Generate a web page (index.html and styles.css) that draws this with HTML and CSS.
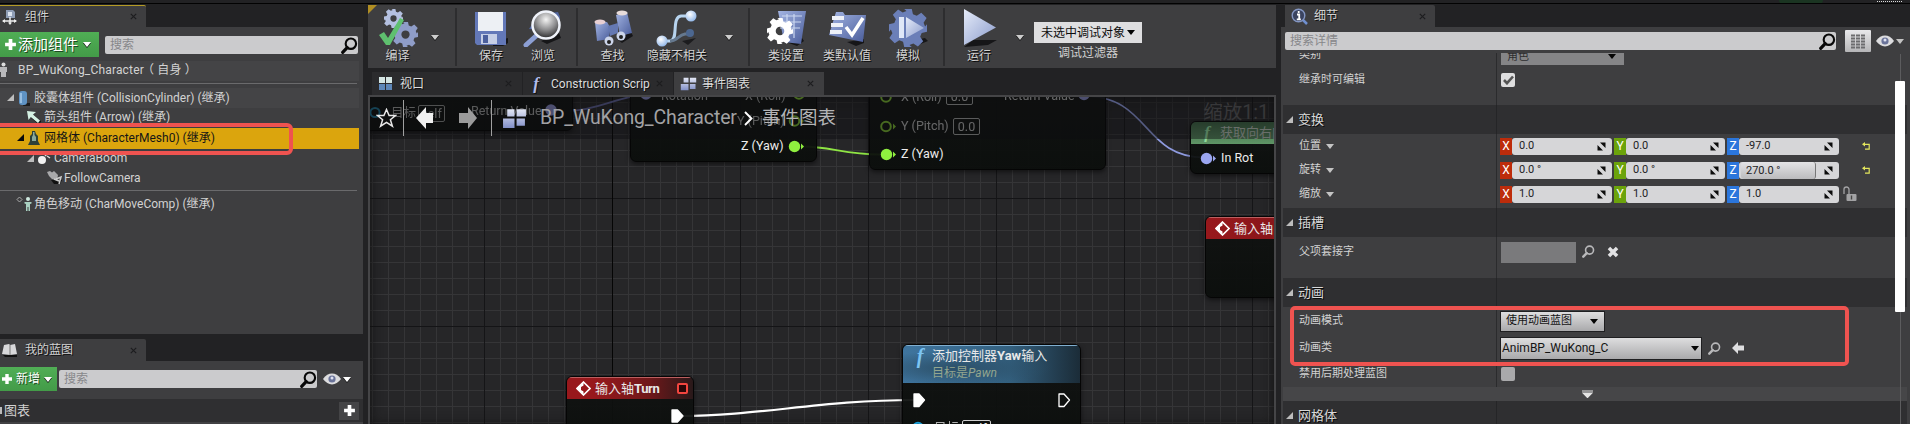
FILE: index.html
```html
<!DOCTYPE html>
<html lang="zh-CN">
<head>
<meta charset="utf-8">
<title>BP_WuKong_Character</title>
<link rel="stylesheet" href="styles.css">
</head>
<body>
<svg class="defs" width="0" height="0">
  <defs>
    <linearGradient id="steel" x1="0" y1="0" x2="1" y2="1"><stop offset="0" stop-color="#e6ecfa"/><stop offset="1" stop-color="#8a9bcb"/></linearGradient>
    <linearGradient id="blue" x1="0" y1="0" x2="1" y2="1"><stop offset="0" stop-color="#a3b4e2"/><stop offset="1" stop-color="#4a5d9b"/></linearGradient>
    <linearGradient id="tile" x1="0" y1="0" x2="0" y2="1"><stop offset="0" stop-color="#e4e8f6"/><stop offset="1" stop-color="#8290c8"/></linearGradient>
    <radialGradient id="lens" cx=".5" cy=".3" r=".7"><stop offset="0" stop-color="#f4f4f4"/><stop offset=".55" stop-color="#8c8c8e"/><stop offset="1" stop-color="#2a2a2c"/></radialGradient>
    <radialGradient id="ball" cx=".4" cy=".35" r=".7"><stop offset="0" stop-color="#fff"/><stop offset="1" stop-color="#8db4e8"/></radialGradient>
    <symbol id="search" viewBox="0 0 16 16"><circle cx="9.3" cy="6.3" r="4.9" fill="none" stroke="currentColor" stroke-width="2"/><path d="M5.8 10 1.6 14.4" stroke="currentColor" stroke-width="3" stroke-linecap="round"/></symbol>
    <symbol id="eye" viewBox="0 0 18 12"><path d="M0 6Q4 .6 9 .6T18 6Q14 11.4 9 11.4T0 6Z" fill="#dcdcde"/><circle cx="9" cy="6" r="3.6" fill="#6a7399"/><circle cx="9" cy="5" r="1.5" fill="#dfe2f2"/></symbol>
    <symbol id="plus" viewBox="0 0 12 12"><path d="M4.3 1h3.4v3.3H11v3.4H7.7V11H4.3V7.7H1V4.3h3.3z" fill="#fff"/></symbol>
    <symbol id="close" viewBox="0 0 7 7"><path d="M.8.8l5.4 5.4M6.2.8.8 6.2" stroke="#1d1d1f" stroke-width="1.2"/></symbol>
    <symbol id="gear" viewBox="-10 -10 20 20"><path fill-rule="evenodd" d="M-2-10h4l.6 2.8 2 .8 2.4-1.6 2.8 2.8-1.6 2.4.8 2L10-2v4l-2.8.6-.8 2 1.6 2.4-2.8 2.8-2.4-1.6-2 .8L2 10h-4l-.6-2.800-2-.8-2.4 1.600-2.800-2.800 1.600-2.400-.8-2L-10 2v-4l2.800-.6.8-2-1.600-2.400 2.800-2.800 2.400 1.600 2-.8zM0-3.300a3.300 3.300 0 1 0 0 6.600 3.300 3.300 0 1 0 0-6.600z"/></symbol>
    <symbol id="graph" viewBox="0 0 24 20"><path d="M5 1h7v7H5zM14 1h9v7h-9zM1 10h11v9H1zM14 10h8v7h-8z" fill="url(#tile)"/></symbol>
    <symbol id="diamond" viewBox="0 0 15 15"><path d="M7.500 1 14 7.500 7.500 14 1 7.500z" fill="none" stroke="#fff" stroke-width="1.600"/><path d="M7.500 1v3.500L5 6v3l2.500 1.500V14L1 7.500z" fill="#fff"/></symbol>
    <symbol id="drag" viewBox="0 0 9 9"><path d="M3 .5h5.500V6zM.5 3v5.500H6z" fill="#0c0c0c"/></symbol>
    <symbol id="reset" viewBox="0 0 8 8"><path d="M1.500 2.300h5.700v4.900H3" fill="none" stroke="#e3e65c" stroke-width="1.200"/><path d="M0 2.300 3 0v4.600z" fill="#e3e65c"/></symbol>
  </defs>
</svg>
<div class="topline"><i class="glow"></i><i class="dots"></i></div>
<div class="editor">
  <aside class="left">
    <div class="tabbar">
      <div class="tab focus">
        <svg width="16" height="16" viewBox="0 0 16 16"><path d="M4 1h7l2 2v6H4z" fill="#8f9db5"/><path d="M6 3h4v4H6z" fill="#dce3ee"/><path d="M8 8v6M1 12h13" stroke="#eee" stroke-width="1.500"/><path d="M0 12l3-2v4zM15 12l-3-2v4zM8 16l-2-2.500h4z" fill="#eee"/></svg>
        <span>组件</span><svg class="x" width="7" height="7"><use href="#close"/></svg>
      </div>
    </div>
    <section class="panel components">
      <div class="tools">
        <button class="green add"><svg width="13" height="13"><use href="#plus"/></svg><span>添加组件</span><i class="caret"></i></button>
        <div class="search"><span>搜索</span><svg width="17" height="17"><use href="#search"/></svg></div>
      </div>
      <div class="self row">
        <svg width="8" height="16" viewBox="0 0 8 16"><circle cx="3.500" cy="2.500" r="2" fill="#ddd"/><path d="M0 5h7v5H6v5H1v-5H0z" fill="#b9b9bb"/></svg>
        <span>BP_WuKong_Character<b>（ 自身 ）</b></span>
      </div>
      <div class="rule"></div>
      <div class="row alt d1"><i class="tri"></i><svg width="12" height="16" viewBox="0 0 12 16"><path d="M6 13h6v3H5z" fill="#1c1c1c"/><rect x="1" y="1" width="8" height="14" rx="3" fill="#5f93c4"/><path d="M3 3v10" stroke="#a9cdec" stroke-width="1.500"/></svg><span>胶囊体组件 (CollisionCylinder) (继承)</span></div>
      <div class="row d2"><svg width="15" height="14" viewBox="0 0 15 14"><path d="M6 6l8 7" stroke="#111" stroke-width="4"/><path d="M1 1l9 1-3 2.500 7 6-2 2.500L4.800 7 2.500 10z" fill="#d5f1e4"/></svg><span>箭头组件 (Arrow) (继承)</span></div>
      <div class="row sel d3"><i class="tri dark"></i><svg width="12" height="16" viewBox="0 0 12 16"><path d="M4 1h3l1 3 2 2v5l2 4H0l2-4V6l2-2z" fill="#2c4038"/><path d="M5 2h1.500v3L8 7v4H4V7l1-2z" fill="#8aa89c"/></svg><span>网格体 (CharacterMesh0) (继承)</span></div>
      <div class="row d4"><i class="tri"></i><svg width="14" height="14" viewBox="0 0 14 14"><circle cx="5" cy="9" r="4" fill="#f2f2f2"/><path d="M8 5l4-4M10 5l3 2" stroke="#ddd" stroke-width="1.500"/></svg><span>CameraBoom</span></div>
      <div class="row d5"><svg width="17" height="15" viewBox="0 0 17 15"><path d="M5 10h11l-2 4H8z" fill="#111"/><path d="M1 2l3-1 2 1.500L8 1l4 4-1 5-5-1-3-3z" fill="#a9a9ab"/><path d="M10 9l5-2-2 7M8 9l5 2" stroke="#ccc" stroke-width="1.500" fill="none"/></svg><span>FollowCamera</span></div>
      <div class="rule second"></div>
      <div class="row move"><svg width="18" height="18" viewBox="0 0 18 18"><path d="M3.500 2 6 4.500 3.500 7 1 4.500z" fill="none" stroke="#aaa"/><circle cx="12" cy="4" r="2" fill="#cfe9df"/><path d="M8.500 7h7v1.500L14 9v7h-1.500v-4h-1v4H10V9l-1.500-.5z" fill="#a9d0c1"/></svg><span>角色移动 (CharMoveComp) (继承)</span></div>
      <i class="mark mark-left"></i>
    </section>
    <div class="tabbar lower">
      <div class="tab">
        <svg width="16" height="15" viewBox="0 0 16 15"><path d="M1 12h14v2H3z" fill="#111"/><path d="M2 2l5-1 1 1 5-1 2 10-7 1-8-1z" fill="#d8d8da"/><path d="M8 2v10" stroke="#777"/></svg>
        <span>我的蓝图</span><svg class="x" width="7" height="7"><use href="#close"/></svg>
      </div>
    </div>
    <section class="panel mybp">
      <div class="tools2">
        <button class="green new"><svg width="12" height="12"><use href="#plus"/></svg><span>新增</span><i class="caret"></i></button>
        <div class="search"><span>搜索</span><svg width="17" height="17"><use href="#search"/></svg></div>
        <svg class="eye" width="18" height="12"><use href="#eye"/></svg><i class="caret"></i>
      </div>
      <div class="graphs"><i class="nub"></i><span>图表</span><button><svg width="13" height="13"><use href="#plus"/></svg></button></div>
    </section>
  </aside>

  <main class="center">
    <div class="toolbar">
      <i class="corner"></i>
      <div class="tool" style="width:49px"><svg width="40" height="38" viewBox="0 0 40 38"><use href="#gear" x="6" y="0" width="19" height="19" fill="#b4c0e0"/><use href="#gear" x="15" y="13" width="25" height="25" fill="#8f9dc8"/><path d="M1 26l5-3 4 6L22 9l4 2L12 36H8z" fill="#5fc06f"/></svg><span>编译</span></div>
      <i class="caret drop1"></i><i class="sep s1"></i>
      <div class="tool" style="width:44px"><svg width="36" height="36" viewBox="0 0 36 36"><path d="M20 32l15-4v5l-5 3H20z" fill="#161618"/><path d="M2 2h31v33H4l-2-2z" fill="#6378b8"/><path d="M5 2h25v19H5z" fill="#edf0f4"/><path d="M8 24h16v10H8z" fill="#c6cfe6"/><path d="M10 25h5v8h-5z" fill="#4b5f9d"/></svg><span>保存</span></div>
      <div class="tool" style="width:60px"><svg width="40" height="38" viewBox="0 0 40 38"><path d="M18 32l18-8 2 5-14 6z" fill="#161618"/><path d="M6 20L15 6l20-3 2 5-2 15z" fill="#51659f"/><path d="M13 27L3 36" stroke="#8c9fd4" stroke-width="5" stroke-linecap="round"/><circle cx="23" cy="16" r="13.500" fill="url(#lens)" stroke="#f0f3fa" stroke-width="2.500"/></svg><span>浏览</span></div>
      <i class="sep s2"></i>
      <div class="tool" style="width:49px"><svg width="40" height="38" viewBox="0 0 40 38"><path d="M24 30l14-7 2 4-11 7z" fill="#161618"/><path d="M2 13l12 0 3 5-1 12-12 2z" fill="url(#blue)"/><path d="M23 6l11-3 5 21-12 3z" fill="url(#blue)"/><path d="M15 17l10-3v10l-8 3z" fill="#6579b3"/><ellipse cx="7" cy="13" rx="5.500" ry="2.500" fill="#e8cfd2"/><ellipse cx="29" cy="4" rx="5.500" ry="2.500" fill="#e8dcda"/><circle cx="16" cy="32" r="4.500" fill="#ccd5ea"/><circle cx="28" cy="27" r="4.500" fill="#ccd5ea"/><circle cx="16" cy="33" r="2" fill="#222"/><circle cx="28" cy="28" r="2" fill="#222"/></svg><span>查找</span></div>
      <div class="tool" style="width:80px"><svg width="44" height="38" viewBox="0 0 44 38"><path d="M27 32l14-3-8 7z" fill="#1c1c1e"/><path d="M7 32h8C24 32 16 8 26 7h9" fill="none" stroke="#b7d4ef" stroke-width="3"/><path d="M15 32c8 0 8-6 15-7h5" fill="none" stroke="#65788e" stroke-width="3"/><circle cx="7" cy="32" r="5.500" fill="url(#ball)"/><circle cx="36" cy="7" r="5.500" fill="url(#ball)"/><circle cx="35" cy="24" r="4" fill="#4c6790"/></svg><span>隐藏不相关</span></div>
      <i class="caret drop2"></i><i class="sep s3"></i>
      <div class="tool" style="width:54px"><svg width="40" height="38" viewBox="0 0 40 38"><path d="M20 33l16-4 2 3-7 5z" fill="#161618"/><path d="M12 2h28l-5 33-17-2z" fill="url(#blue)"/><path d="M16 7h20M15 13h20M14 19h20M21 5v20M28 5v24" stroke="#cbd8f0" stroke-width="1.200" fill="none"/><use href="#gear" x="1" y="9" width="26" height="26" fill="#fff"/></svg><span>类设置</span></div>
      <div class="tool" style="width:68px"><svg width="40" height="38" viewBox="0 0 40 38"><path d="M20 33l17-3v4l-8 3z" fill="#161618"/><path d="M9 3h7l2 3h21l-3 27L2 26z" fill="url(#blue)"/><path d="M5 7h12v4H5zM4 14h12v4H4zM3 21h12v4H3z" fill="#eef1f8"/><path d="M19 18l6 8L36 9" fill="none" stroke="#fff" stroke-width="3.500"/></svg><span>类默认值</span></div>
      <div class="tool" style="width:54px"><svg width="40" height="38" viewBox="0 0 40 38"><path d="M22 32l15-3 3 3-10 4z" fill="#161618"/><use href="#gear" x="1" y="0" width="38" height="38" fill="#6b7fb8"/><circle cx="20" cy="19" r="9" fill="#6b7fb8"/><path d="M11 8h5v21h-5z" fill="#dfe7f7"/><path d="M18 8l18 11-18 10z" fill="url(#steel)"/></svg><span>模拟</span></div>
      <i class="sep s4"></i>
      <div class="tool" style="width:60px"><svg width="40" height="38" viewBox="0 0 40 38"><path d="M5 38l9-7h24l-9 5z" fill="#161618"/><path d="M5 0l32 18.500L5 36z" fill="url(#steel)"/></svg><span>运行</span></div>
      <i class="caret drop3"></i>
      <div class="debug"><button>未选中调试对象<i class="caret black"></i></button><span>调试过滤器</span></div>
    </div>
    <div class="gtabs">
      <div class="gtab dim"><svg width="15" height="15" viewBox="0 0 15 15"><path d="M1 1h6v6H1zM8 1h6v6H8z" fill="#d5e6e4"/><path d="M1 8h6v6H1zM8 8h6v6H8z" fill="#5e87b8"/></svg><span>视口</span><svg class="x" width="7" height="7"><use href="#close"/></svg></div>
      <div class="gtab dim"><em class="fn">f</em><span>Construction Scrip</span><svg class="x" width="7" height="7"><use href="#close"/></svg></div>
      <div class="gtab"><svg width="17" height="14"><use href="#graph"/></svg><span>事件图表</span><svg class="x" width="7" height="7"><use href="#close"/></svg></div>
    </div>
    <div class="canvas">
      <!-- canvas coordinates start at the inner corner of the graph frame -->
      <svg class="wires" width="904" height="327" viewBox="370 97 904 327">
        <path d="M570 111C600 109 608 100 645 94" fill="none" stroke="#5c5f94" stroke-width="1.800"/>
        <path d="M803 146.500C830 146.500 845 154.500 880 154.500" fill="none" stroke="#8fe544" stroke-width="1.800"/>
        <path d="M1084 96C1150 96 1142 157 1204 157.500" fill="none" stroke="#8f9be0" stroke-width="1.600"/>
        <path d="M680 416C760 416 820 400 915 400" fill="none" stroke="#fff" stroke-width="2.200"/>
      </svg>
      <span class="zoom">缩放1:1</span>
      <div class="node" style="left:-20px;top:-40px;width:223px;height:74px"></div>
      <div class="node" style="left:260px;top:-40px;width:187px;height:105px"></div>
      <div class="node" style="left:499px;top:-40px;width:237px;height:113px"></div>
      <div class="node" style="left:820px;top:24px;width:120px;height:53px"><div class="head grn"><em class="fn">f</em><span>获取向右向量</span></div></div>
      <div class="node" style="left:835px;top:119px;width:120px;height:82px"><div class="head red"><svg width="15" height="15"><use href="#diamond"/></svg><span>输入轴</span></div></div>
      <div class="node" style="left:196px;top:279px;width:128px;height:80px"><div class="head red fade"><svg width="15" height="15"><use href="#diamond"/></svg><span>输入轴<b>Turn</b></span><i class="sq"></i></div></div>
      <div class="node" style="left:532px;top:247px;width:179px;height:110px"><div class="head blu"><em class="fn">f</em><div><span>添加控制器<b>Yaw</b>输入</span><small>目标是<i>Pawn</i></small></div></div></div>
      <svg class="pins" width="904" height="327" viewBox="370 97 904 327">
        <g fill="none" stroke-width="2">
          <circle cx="375" cy="112.500" r="4.600" stroke="#1d6d8c"/>
          <g stroke="#77b52e"><circle cx="799" cy="94" r="4.800"/><circle cx="794.500" cy="121" r="4.800"/><circle cx="886" cy="97" r="4.800"/><circle cx="886" cy="126.500" r="4.800"/></g>
          <circle cx="918" cy="427.500" r="4.800" stroke="#1a9fd8"/>
        </g>
        <g fill="#8fef3f"><circle cx="794.500" cy="146.500" r="5.700"/><circle cx="886.500" cy="154.500" r="5.700"/><path d="M801 143.500l3 3-3 3zM893 151.500l3 3-3 3z"/></g>
        <path d="M893 123.500l3 3-3 3zM801 118l3 3-3 3z" fill="#77b52e"/>
        <g fill="#8084bd"><circle cx="551" cy="110" r="5.700"/><circle cx="646" cy="94" r="5.700"/><circle cx="1084" cy="94.500" r="5.700"/></g>
        <circle cx="1206.500" cy="158.500" r="5.700" fill="#9ba6f0"/><path d="M1213 155.500l3 3-3 3z" fill="#9ba6f0"/>
        <g stroke="#fff" stroke-width="1.300" stroke-linejoin="round"><path d="M672 410h5.500l5.500 6-5.500 6H672z" fill="#fff"/><path d="M914 394h5l5.500 6-5.500 6.500h-5z" fill="#fff"/><path d="M1059 394h5l5.500 6-5.500 6.500h-5z" fill="none"/></g>
      </svg>
      <span class="t faint" style="left:21px;top:8px">目标</span><span class="box faint" style="left:48px;top:8px;width:27px">self</span>
      <span class="t faint" style="left:101px;top:6px">Return Value</span>
      <span class="t faint" style="left:291px;top:-9px">Rotation</span><span class="t faint" style="left:375px;top:-9px">X (Roll)</span>
      <span class="t faint" style="left:367px;top:16px">Y (Pitch)</span><span class="t" style="left:371px;top:41px">Z (Yaw)</span>
      <span class="t half" style="left:531px;top:-8px">X (Roll)</span><span class="box half" style="left:576px;top:-9px;width:27px">0.0</span>
      <span class="t half" style="left:531px;top:21px">Y (Pitch)</span><span class="box half" style="left:583px;top:21px;width:27px">0.0</span>
      <span class="t" style="left:531px;top:49px">Z (Yaw)</span><span class="t half" style="left:634px;top:-9px">Return Value</span>
      <span class="t" style="left:851px;top:53px">In Rot</span>
      <span class="t half" style="left:564px;top:323px">目标</span><span class="box" style="left:592px;top:323px;width:29px">self</span>
      <div class="crumbs">
        <svg class="star" width="21" height="20" viewBox="0 0 21 20"><path d="M10.500 1.500l2.600 6h6.400l-5.100 4.200 2 6.500-5.900-3.900-5.900 3.900 2-6.500L1.500 7.500h6.400z" fill="none" stroke="#e8e8e8" stroke-width="1.500"/></svg>
        <i class="bar"></i>
        <svg class="back" width="17" height="22" viewBox="0 0 17 22"><path d="M0 11L10 0v6h7v10h-7v6z" fill="#f0f0f0"/></svg>
        <svg class="fwd" width="18" height="22" viewBox="0 0 18 22"><path d="M18 11L9 0v6H0v10h9v6z" fill="#9b9b9b"/></svg>
        <i class="bar"></i>
        <svg class="gi" width="25" height="21"><use href="#graph"/></svg>
        <span class="bp">BP_WuKong_Character</span>
        <svg class="chev" width="9" height="15" viewBox="0 0 9 15"><path d="M1 1l6.500 6.500L1 14" fill="none" stroke="#fff" stroke-width="1.900"/></svg>
        <span class="ev">事件图表</span>
      </div>
    </div>
  </main>

  <aside class="right">
    <div class="tabbar">
      <div class="tab">
        <svg width="17" height="17" viewBox="0 0 17 17"><path d="M11 11l5 5" stroke="#6f8fd0" stroke-width="2.500"/><circle cx="7.500" cy="7.500" r="6.300" fill="#3b4460" stroke="#8497c4" stroke-width="1.400"/><path d="M7.700 3v2M6 6.500h2.200V11M5.800 11.300h4" stroke="#fff" stroke-width="1.800" fill="none"/></svg>
        <span>细节</span><svg class="x" width="7" height="7"><use href="#close"/></svg>
      </div>
    </div>
    <section class="panel details">
      <div class="dsearch">
        <div class="search"><span>搜索详情</span><svg width="17" height="17"><use href="#search"/></svg></div>
        <button class="grid"><svg width="14" height="15" viewBox="0 0 14 15"><path d="M0 1.500h4m1 0h4m1 0h4M0 4.500h4m1 0h4m1 0h4M0 7.500h4m1 0h4m1 0h4M0 10.500h4m1 0h4m1 0h4M0 13.500h4m1 0h4m1 0h4" stroke="#6c6c6e" stroke-width="2"/></svg></button>
        <svg class="eye" width="18" height="12"><use href="#eye"/></svg><i class="caret soft"></i>
      </div>
      <div class="list">
        <div class="prop p-type"><label>类别</label><div><span class="typebox">角色<i class="caret black"></i></span></div></div>
        <div class="prop p-edit"><label>继承时可编辑</label><div><span class="check"><svg width="11" height="10" viewBox="0 0 11 10"><path d="M1 5l3 3.200L10 1.500" fill="none" stroke="#555" stroke-width="2.600"/></svg></span></div></div>
        <div class="cat"><i class="tri"></i><span>变换</span><i class="split"></i></div>
        <div class="vecs">
          <div class="prop vec"><label>位置 <i class="caret soft"></i></label><div><b class="ax r">X</b><span class="num">0.0<svg width="9" height="9"><use href="#drag"/></svg></span><b class="ax g">Y</b><span class="num mid">0.0<svg width="9" height="9"><use href="#drag"/></svg></span><b class="ax b">Z</b><span class="num">-97.0<svg width="9" height="9"><use href="#drag"/></svg></span><svg class="rs" width="8" height="8"><use href="#reset"/></svg></div></div>
          <div class="prop vec"><label>旋转 <i class="caret soft"></i></label><div><b class="ax r">X</b><span class="num">0.0 °<svg width="9" height="9"><use href="#drag"/></svg></span><b class="ax g">Y</b><span class="num mid">0.0 °<svg width="9" height="9"><use href="#drag"/></svg></span><b class="ax b">Z</b><span class="num slide"><u>270.0 °</u><svg width="9" height="9"><use href="#drag"/></svg></span><svg class="rs" width="8" height="8"><use href="#reset"/></svg></div></div>
          <div class="prop vec"><label>缩放 <i class="caret soft"></i></label><div><b class="ax r">X</b><span class="num">1.0<svg width="9" height="9"><use href="#drag"/></svg></span><b class="ax g">Y</b><span class="num mid">1.0<svg width="9" height="9"><use href="#drag"/></svg></span><b class="ax b">Z</b><span class="num">1.0<svg width="9" height="9"><use href="#drag"/></svg></span><svg class="lock" width="14" height="16" viewBox="0 0 14 16"><path d="M1 8V3.500a2.500 2.500 0 0 1 5 0V8" fill="none" stroke="#a2a2a4" stroke-width="1.300"/><rect x="3.500" y="8" width="10" height="7" rx="1" fill="#a2a2a4"/><path d="M8.500 9.500v4" stroke="#444" stroke-width="1.400"/></svg></div></div>
        </div>
        <div class="cat"><i class="tri"></i><span>插槽</span><i class="split"></i></div>
        <div class="prop p-socket"><label>父项套接字</label><div><span class="socket"></span><svg class="m" width="13" height="13"><use href="#search"/></svg><svg width="12" height="12" viewBox="0 0 11 11"><path d="M1.800 1.800l7.400 7.400M9.200 1.800L1.800 9.200" stroke="#e2e2e4" stroke-width="3.200"/></svg></div></div>
        <div class="cat anim"><i class="tri"></i><span>动画</span><i class="split"></i></div>
        <div class="animprops">
          <div class="prop p-mode"><label>动画模式</label><div><span class="combo mode">使用动画蓝图<i class="caret black"></i></span></div></div>
          <div class="prop p-class"><label>动画类</label><div><span class="combo cls">AnimBP_WuKong_C<i class="caret black"></i></span><svg class="m" width="13" height="13"><use href="#search"/></svg><svg class="use" width="12" height="12" viewBox="0 0 12 12"><path d="M0 6l6-6v3.500h6v5H6V12z" fill="#dedee0"/></svg></div></div>
          <div class="prop p-post"><label>禁用后期处理蓝图</label><div><span class="check off"></span></div></div>
        </div>
        <div class="more"><svg width="11" height="8" viewBox="0 0 11 8"><path d="M0 1h11M1 3h9L5.500 7.500z" stroke="#e4e4e4" stroke-width="1.200" fill="#e4e4e4"/></svg></div>
        <div class="cat"><i class="tri"></i><span>网格体</span><i class="split"></i></div>
      </div>
      <i class="scroll"></i><i class="mark mark-right"></i>
    </section>
  </aside>
</div>
</body>
</html>
```
FILE: styles.css
```css
* { box-sizing: border-box; }
body { margin: 0; width: 1910px; height: 424px; overflow: hidden; background: #222224; color: #d2d2d2; font: 12px/16px Roboto, "Noto Sans CJK SC", sans-serif; white-space: nowrap; }
button { border: 0; padding: 0; font: inherit; color: inherit; }
svg { display: block; flex: none; }
i, em { flex: none; }
.defs { position: absolute; }
.topline { height: 4px; border-bottom: 1px solid #020202; display: flex; justify-content: flex-end; padding-right: 8px; overflow: hidden; }
.glow { width: 44px; height: 4px; margin-right: 54px; background: #1b3522; border-radius: 0 0 22px 22px; }
.dots { width: 25px; height: 1px; margin-top: 1px; background: repeating-linear-gradient(90deg, #ddd 0 1px, transparent 1px 2px); }
.editor { display: grid; grid-template-columns: 363px 908px 629px; column-gap: 5px; height: 420px; }
.left, .center, .right { min-width: 0; height: 420px; overflow: hidden; }

.tabbar { height: 23px; padding-top: 1px; }
.tab { display: flex; align-items: center; width: 146px; height: 22px; padding: 0 9px 0 2px; background: #3e3e40; border-radius: 0 2px 0 0; text-shadow: 1px 1px 0 #111; }
.tab.focus { border-top: 1px solid #b59b25; }
.tab span { margin-left: 7px; }
.x { margin-left: auto; }
.panel { background: #3e3e40; position: relative; }
.caret { width: 0; height: 0; border: 4px solid transparent; border-top: 5px solid #fff; border-bottom: 0; filter: drop-shadow(0 1px 0 #111); }
.caret.black { border-top-color: #050505; filter: none; }
.caret.soft { border-top-color: #c4c4c4; filter: none; }
.green { display: flex; align-items: center; background: linear-gradient(#50ae55, #439b48); color: #fff; text-shadow: 1px 1px 0 #1c4a20; }
.search { display: flex; align-items: center; justify-content: space-between; height: 18px; padding: 0 0 0 5px; background: #cbcbcd; border-radius: 2px; color: #87878a; }
.search svg { color: #080808; }

.components { height: 307px; padding-top: 5px; overflow: hidden; }
.tools { display: flex; gap: 6px; height: 25px; align-items: flex-start; }
.add { width: 99px; height: 25px; padding-left: 4px; font-size: 15px; }
.add span { margin: 0 5px 0 1px; }
.tools .search { width: 253px; margin-top: 4px; }
.row { display: flex; align-items: center; height: 20px; width: 359px; }
.row.self { height: 20px; margin-top: 4px; padding-bottom: 2px; background: #444446; }
.self svg { margin-right: 10px; }
.self span { letter-spacing: .18px; }
.self b { font-weight: 400; margin-left: -2px; }
.rule { height: 1px; width: 357px; margin: 2px 0 4px; background: #6a6a6c; }
.tri { width: 0; height: 0; border-left: 7px solid transparent; border-bottom: 7px solid #bdbdbd; }
.tri.dark { border-bottom-color: #0b0b0b; }
.alt { background: #444446; }
.d1 { padding-left: 7px; padding-bottom: 1px; } .d1 svg { margin: 0 4px 0 4px; }
.d2, .d4, .d5, .d3 { padding-bottom: 2px; }
.d2 { padding-left: 26px; } .d2 svg { margin-right: 3px; }
.d3 { padding-left: 17px; } .d3 svg { margin: 0 4px 0 4px; }
.sel { height: 21px; background: #dba50d; color: #161616; }
.d4 { padding-left: 27px; } .d4 svg { margin: 0 3px; }
.d5 { height: 19px; padding-left: 46px; } .d5 svg { margin-right: 1px; }
.rule.second { margin: 2px 0 3px; }
.move { padding-left: 16px; }
.mark { position: absolute; border: 4px solid #ef5350; z-index: 4; }
.mark-left { left: -8px; top: 96px; width: 301px; height: 32px; border-radius: 6px; }
.lower { height: 27px; padding-top: 5px; }
.mybp { height: 63px; padding-top: 6px; }
.tools2 { display: flex; align-items: center; height: 24px; }
.new { width: 57px; height: 24px; padding-left: 1px; }
.new span { margin: 0 4px 0 3px; }
.tools2 .search { width: 258px; margin-left: 2px; }
.eye { margin: 0 2px 0 6px; }
.graphs { display: flex; align-items: center; height: 25px; margin-top: 8px; padding-right: 4px; background: #2f2f31; border-bottom: 2px solid #414143; font-size: 13px; }
.nub { width: 2px; height: 7px; margin-right: 2px; background: #bbb; }
.graphs button { display: grid; place-items: center; width: 20px; height: 18px; margin-left: auto; background: #444446; }

.toolbar { position: relative; display: flex; align-items: flex-start; margin-top: 1px; background: #3e3e40; height: 63px; padding: 4px 0 0 5px; }
.corner { position: absolute; left: 0; top: 0; width: 0; height: 0; border-top: 9px solid #b08e23; border-right: 9px solid transparent; }
.tool { display: flex; flex: none; flex-direction: column; align-items: center; height: 58px; }
.tool svg { height: 38px; }
.tool span { margin-top: 1px; text-shadow: 1px 1px 0 #0c0c0c; }
.toolbar > .caret { margin-top: 26px; border-top-color: #cdcdcd; }
.sep { width: 2px; height: 58px; background: #2d2d2f; }
.toolbar .drop1 { margin-left: 9px; }
.s1 { margin: -1px 12px 0 16px; }
.s2 { margin: -1px 10px 0 3px; }
.toolbar .drop2 { margin-left: 8px; }
.s3 { margin: -1px 9px 0 15px; }
.s4 { margin: -1px 4px 0 8px; }
.toolbar .drop3 { margin-left: 7px; }
.debug { display: flex; flex-direction: column; align-items: center; width: 108px; margin: 13px 0 0 10px; }
.debug button { display: flex; align-items: center; justify-content: center; gap: 2px; width: 108px; height: 21px; background: #dedee0; color: #0d0d0d; }
.debug span { margin-top: 2px; }
.gtabs { display: flex; gap: 1px; height: 23px; margin: 4px 0 0 4px; }
.gtab { display: flex; align-items: center; width: 150px; height: 23px; padding: 0 10px 0 6px; background: #3e3e40; color: #dcdcdc; text-shadow: 1px 1px 0 #111; }
.gtab.dim { background: #2b2b2d; }
.gtab span { margin-left: 7px; }
.gtab .fn + span { margin-left: 8px; }
.gtab > svg:first-child[width="17"] + span { margin-left: 5px; }
.fn { font: italic bold 17px/18px "Liberation Serif", serif; color: #b2bdec; width: 14px; text-align: center; }
.canvas { position: relative; height: 330px; overflow: hidden; border: solid #454547; border-width: 2px 2px 0; background-color: #262628;
  background-image: linear-gradient(90deg, #050505 1px, transparent 1px), linear-gradient(#141416 1px, transparent 1px), linear-gradient(90deg, #151517 1px, transparent 1px), linear-gradient(#353537 1px, transparent 1px), linear-gradient(90deg, #353537 1px, transparent 1px);
  background-size: 2000px 100%, 100% 128px, 128px 100%, 100% 16px, 16px 100%;
  background-position: 242px 0, 0 101px, 114px 0, 0 5px, 2px 0;
  box-shadow: inset 0 0 12px #111; }
.wires, .pins { position: absolute; left: 0; top: 0; }
.node { position: absolute; border: 1px solid #050505; border-radius: 6px; background: linear-gradient(#101211ee, #0b0e0cf2); box-shadow: 0 2px 5px #0008; overflow: hidden; }
.head { display: flex; align-items: center; height: 22px; padding-left: 9px; color: #e8e8e8; }
.head .fn { margin-right: 6px; }
.grn { background: linear-gradient(#3d6444, #5f9566); color: #b4beb5; font-size: 13px; }
.grn .fn { color: #8fd89b; }
.red { background: linear-gradient(90deg, #98181c, #7d1518); border-top: 1px solid #bb5f60; }
.red.fade { background: linear-gradient(90deg, #98181c 20%, #70181a 65%, #29191a); }
.red span { margin-left: 4px; font-size: 13px; }
.red b { letter-spacing: -.4px; }
.sq { width: 11px; height: 11px; margin-left: auto; margin-right: 5px; border: 2px solid #f2453f; border-radius: 2px; background: #2a0607; }
.blu { height: 38px; padding-left: 10px; align-items: flex-start; border-top: 1px solid #7faed0; background: radial-gradient(ellipse at 30% 60%, #2c5069, transparent 55%), linear-gradient(90deg, #3f759f, #33607f 60%, #1b2c38); }
.blu .fn { color: #7cc4f2; font-size: 20px; margin: 1px 5px 0 0; }
.blu span { display: block; font-size: 13px; line-height: 18px; margin-top: 1px; }
.blu small { display: block; font-size: 12px; line-height: 16px; color: #93a68f; }
.t, .box { position: absolute; color: #ececec; line-height: 16px; font-size: 12.500px; }
.box { border: 1px solid #d0d0d0; border-radius: 2px; text-align: center; line-height: 15px; height: 17px; }
.faint { opacity: .62; }
.half { opacity: .72; }
.crumbs { position: absolute; inset: 0 0 auto 0; height: 42px; display: flex; align-items: center; padding-left: 6px; background: #0e0e1073; color: #a2a2a4; }
.bar { width: 1px; height: 36px; background: #a0a0a0; }
.star { margin-right: 6px; }
.back { margin: 0 26px 0 12px; }
.fwd { margin-right: 14px; }
.gi { margin: 0 13px 0 10px; }
.bp { width: 196px; font-size: 19.500px; letter-spacing: -.12px; line-height: 24px; }
.chev { margin: 0 9px 0 8px; }
.ev { font-size: 18.500px; line-height: 24px; color: #b4b4b6; }
.zoom { position: absolute; right: 5px; top: 4px; font-size: 19.500px; line-height: 24px; color: #59595b; }

.right .tabbar { padding-left: 4px; }
.right .tab { width: 150px; padding-left: 6px; padding-right: 9px; }
.right .tab span { margin-left: 6px; }
.details { height: 397px; padding: 5px 0 0 2px; overflow: hidden; }
.dsearch { display: flex; align-items: flex-start; height: 21px; padding-left: 2px; }
.dsearch .search { width: 551px; }
.grid { display: grid; place-items: center; width: 26px; height: 22px; margin: -2px 0 0 9px; background: linear-gradient(#e8e8ea, #b5b5b7); border-radius: 1px; }
.dsearch .eye { margin: 3px 2px 0 5px; }
.dsearch .caret { margin-top: 7px; }
.list { width: 624px; font-size: 11px; }
.prop { display: grid; grid-template-columns: 213px 1fr; }
.prop label { padding-left: 16px; display: flex; align-items: center; gap: 5px; }
.prop > div { display: flex; align-items: center; border-left: 1px solid #2b2b2d; padding-left: 4px; }
.p-type { height: 12px; overflow: hidden; }
.p-type label { align-items: flex-start; margin-top: -6px; }
.typebox { display: flex; justify-content: space-between; width: 123px; height: 22px; margin-top: -4px; padding: 0 8px 4px 6px; background: #858587; color: #2d2d2f; }
.typebox .caret { margin-top: 5px; }
.p-edit { height: 40px; }
.p-edit label, .p-edit > div { padding-bottom: 10px; }
.check { display: grid; place-items: center; width: 14px; height: 14px; background: #dededf; border-radius: 2px; }
.check.off { background: #a9a9ab; }
.cat { position: relative; display: flex; align-items: center; height: 29px; padding-left: 3px; background: #2f2f31; font-size: 13px; color: #d8d8d8; text-shadow: 1px 1px 0 #0a0a0a; }
.cat.anim { height: 29px; }
.cat span { width: 198px; margin-left: 5px; }
.split { width: 1px; height: 100%; background: #252527; }
.vecs { height: 74px; }
.vec { height: 24px; }
.vec:last-child { height: 26px; }
.vec:last-child label, .vec:last-child > div { padding-bottom: 2px; }
.prop.vec > div { padding-left: 3px; }
.ax { width: 12px; height: 17px; font: 12px/17px Roboto, sans-serif; color: #fff; text-align: center; }
.ax.r { background: #bd2c0b; } .ax.g { background: #6ba30b; } .ax.b { background: #2b76dc; }
.num { display: flex; flex: none; align-items: center; justify-content: space-between; width: 100px; height: 17px; margin-right: 2px; padding: 0 6px 0 7px; background: #d6d6d8; color: #1d1d1f; border-radius: 3px; }
.num.mid { width: 99px; }
.num.slide { padding-left: 2px; }
.slide u { width: 75px; height: 17px; padding-left: 5px; line-height: 17px; text-decoration: none; border-right: 1px solid #777; border-radius: 3px; background: linear-gradient(#e4e4e6, #bbbbbd); }
.rs { margin-left: 21px; }
.lock { margin-left: 2px; }
.p-socket { height: 41px; }
.p-socket label { padding-bottom: 12px; }
.p-socket > div { padding-bottom: 12px; gap: 12px; }
.socket { width: 75px; height: 21px; margin-top: 1px; background: #7a7a7c; }
.m { color: #b8b8ba; }
.socket + .m { margin-left: -6px; }
.p-mode { height: 28px; }
.combo { display: flex; align-items: center; justify-content: space-between; padding: 0 6px 0 5px; background: linear-gradient(#dededf, #a9a9ab); color: #141414; border: 1px solid #1f1f21; }
.mode { width: 105px; height: 21px; margin-left: -1px; }
.cls { width: 202px; height: 23px; margin-left: -1px; padding: 0 2px 0 1px; font-size: 12px; }
.p-class { height: 26px; }
.p-class .m { margin: 0 11px 0 6px; }
.p-post { height: 26px; }
.more { height: 14px; padding: 3px 0 0 299px; background: #464648; }
.scroll { position: absolute; left: 614px; top: 54px; width: 10px; height: 231px; background: #fff; border-radius: 1px; }
.scroll::before { content: ""; position: absolute; left: 5px; top: -27px; width: 1px; height: 27px; background: #5c5c5e; }
.scroll::after { content: ""; position: absolute; left: 5px; top: 231px; width: 1px; height: 120px; background: #5c5c5e; }
.mark-right { left: 9px; top: 279px; width: 559px; height: 60px; border-radius: 5px; }
```
